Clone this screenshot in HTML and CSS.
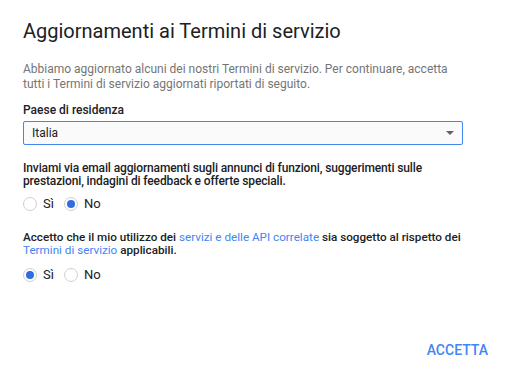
FILE: index.html
```html
<!DOCTYPE html>
<html lang="it">
<head>
  <meta charset="UTF-8">
  <meta name="viewport" content="width=device-width, initial-scale=1.0">
  <title>Aggiornamenti ai Termini di servizio</title>
  <link rel="stylesheet" href="styles.css">
</head>
<body>
  <div class="dialog">
    <h1 class="dialog-title">Aggiornamenti ai Termini di servizio</h1>
    <p class="intro">Abbiamo aggiornato alcuni dei nostri Termini di servizio. Per continuare, accetta tutti i Termini di servizio aggiornati riportati di seguito.</p>

    <!-- Paese -->
    <label class="field-label" for="country">Paese di residenza</label>
    <div class="select" id="country">
      <span>Italia</span>
      <svg class="select-arrow" width="8" height="4" viewBox="0 0 8 4"><path d="M0 0h8L4 4z" fill="#5f6368"/></svg>
    </div>

    <!-- Email -->
    <p class="question">Inviami via email aggiornamenti sugli annunci di funzioni, suggerimenti sulle prestazioni, indagini di feedback e offerte speciali.</p>
    <div class="choices">
      <label class="choice"><input type="radio" name="email"> Sì</label>
      <label class="choice"><input type="radio" name="email" checked> No</label>
    </div>

    <!-- Termini -->
    <p class="question question-terms">Accetto che il mio utilizzo dei <a href="#">servizi e delle API correlate</a> sia soggetto al rispetto dei <a href="#">Termini di servizio</a> applicabili.</p>
    <div class="choices">
      <label class="choice"><input type="radio" name="terms" checked> Sì</label>
      <label class="choice"><input type="radio" name="terms"> No</label>
    </div>

    <div class="actions">
      <button class="btn-accept">ACCETTA</button>
    </div>
  </div>
</body>
</html>
```

FILE: styles.css
```css
body {
  margin: 0;
  padding: 0;
  background: #ffffff;
  font-family: Roboto, "Liberation Sans", Arial, sans-serif;
  color: #202124;
}

/* Contenitore del dialogo */
.dialog {
  width: 473px;
  padding: 19px 0 0 23px;
}

.dialog-title {
  margin: 0;
  font-size: 20px;
  line-height: 24px;
  font-weight: 400;
  color: #202124;
}

.intro {
  width: 440px;
  margin: 19px 0 0;
  font-size: 12px;
  line-height: 15px;
  color: #757575;
}

.field-label {
  display: block;
  margin-top: 10px;
  font-size: 12px;
  line-height: 16px;
  font-weight: 500;
}

/* Finto select */
.select {
  box-sizing: border-box;
  width: 440px;
  height: 24px;
  margin-top: 3px;
  padding: 0 8px;
  border: 1px solid #4285f4;
  border-radius: 2px;
  background: #fafafa;
  display: flex;
  align-items: center;
  justify-content: space-between;
  font-size: 12px;
  line-height: 22px;
}

.question {
  width: 440px;
  margin: 17px 0 0;
  font-size: 12px;
  line-height: 13px;
  font-weight: 500;
  letter-spacing: -0.13px;
}

.question-terms {
  margin-top: 20px;
  font-size: 11.7px;
  letter-spacing: 0;
}

.question a {
  color: #4285f4;
  font-weight: 400;
  text-decoration: none;
}

/* Radio */
.choices {
  display: flex;
  margin-top: 9px;
  height: 14px;
}

.question-terms + .choices {
  margin-top: 11px;
}

.choice {
  display: flex;
  align-items: center;
  margin-right: 10px;
  font-size: 13px;
  line-height: 14px;
  color: #202124;
}

.choice input {
  appearance: none;
  -webkit-appearance: none;
  box-sizing: border-box;
  width: 14px;
  height: 14px;
  margin: 0 6px 0 0;
  border: 1px solid #d0d0d0;
  border-radius: 50%;
  background: #fff;
  display: grid;
  place-content: center;
}

.choice input:checked::before {
  content: "";
  width: 8px;
  height: 8px;
  border-radius: 50%;
  background: #2f6de1;
}

/* Pulsante */
.actions {
  display: flex;
  justify-content: flex-end;
  margin-top: 50px;
}

.btn-accept {
  height: 36px;
  padding: 0 8px;
  border: none;
  background: transparent;
  font-family: Roboto, "Liberation Sans", Arial, sans-serif;
  font-size: 14px;
  font-weight: 500;
  color: #4285f4;
  cursor: pointer;
}
```
